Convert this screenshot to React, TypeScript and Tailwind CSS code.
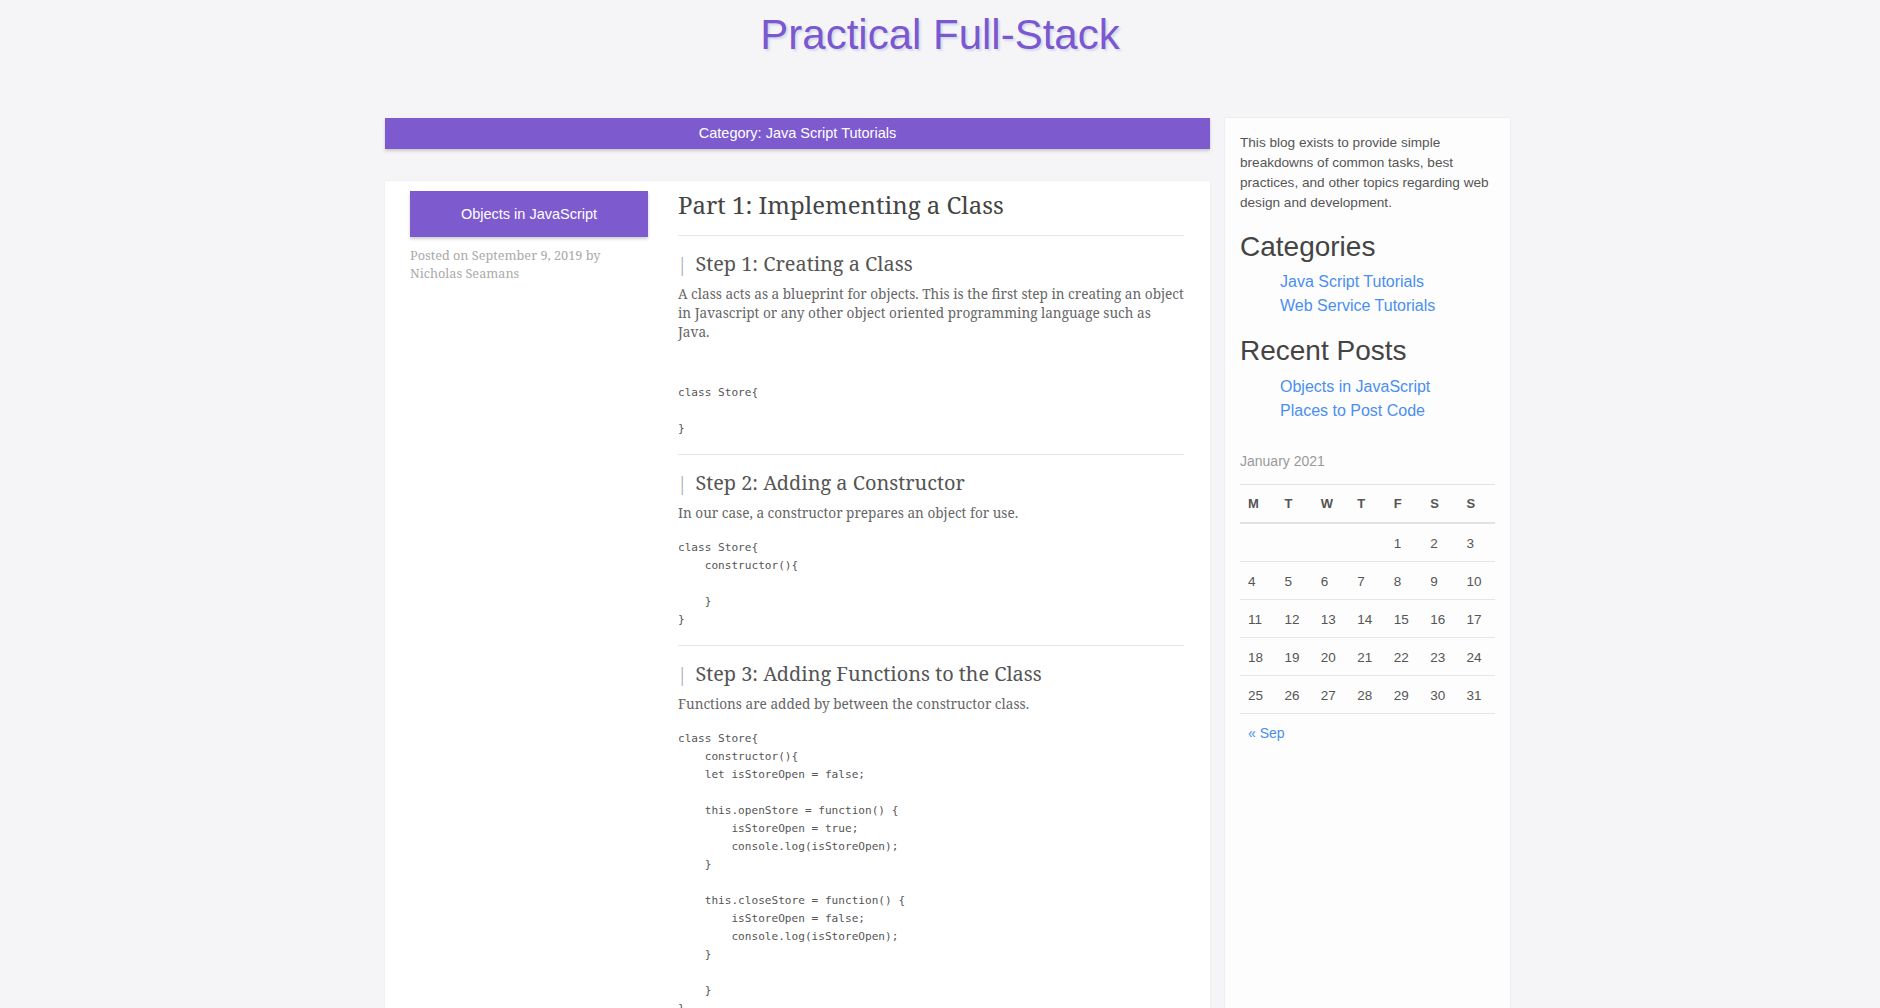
import React from "react";

const steps = [
  {
    title: "Step 1: Creating a Class",
    lines: [
      "A class acts as a blueprint for objects. This is the first step in creating an object",
      "in Javascript or any other object oriented programming language such as",
      "Java.",
    ],
    gap: "mt-[43px]",
    code: `class Store{

}`,
  },
  {
    title: "Step 2: Adding a Constructor",
    lines: ["In our case, a constructor prepares an object for use."],
    gap: "mt-[17px]",
    code: `class Store{
    constructor(){

    }
}`,
  },
  {
    title: "Step 3: Adding Functions to the Class",
    lines: ["Functions are added by between the constructor class."],
    gap: "mt-[17px]",
    code: `class Store{
    constructor(){
    let isStoreOpen = false;

    this.openStore = function() {
        isStoreOpen = true;
        console.log(isStoreOpen);
    }

    this.closeStore = function() {
        isStoreOpen = false;
        console.log(isStoreOpen);
    }

    }
}`,
  },
];

const weeks: (number | null)[][] = [
  [null, null, null, null, 1, 2, 3],
  [4, 5, 6, 7, 8, 9, 10],
  [11, 12, 13, 14, 15, 16, 17],
  [18, 19, 20, 21, 22, 23, 24],
  [25, 26, 27, 28, 29, 30, 31],
];

export default function App() {
  return (
    <div className="min-h-screen bg-[#f5f5f7] font-['Liberation_Sans',Arial,sans-serif]">
      {/* Site title */}
      <header className="h-[118px] pt-[12px] text-center">
        <h1 className="text-[42px] leading-[46px] text-[#7b58d0] [text-shadow:2px_2px_2px_#d3daec]">
          Practical Full-Stack
        </h1>
      </header>

      <div className="w-[1140px] mx-auto flex items-start">
        {/* Posts column */}
        <main className="w-[855px] px-[15px]">
          <div className="h-[31px] bg-[#7d5bcf] text-white text-[14.5px] leading-[31px] text-center shadow-[0_2px_3px_rgba(0,0,0,0.18)]">
            Category: Java Script Tutorials
          </div>

          <article className="mt-[32px] bg-white p-[10px] flex min-h-[1100px] shadow-[0_0_2px_rgba(0,0,0,0.06)]">
            <div className="w-[268px] shrink-0 px-[15px]">
              <div className="h-[46px] pt-[1px] bg-[#7d5bcf] text-white text-[14.5px] flex items-center justify-center shadow-[0_2px_3px_rgba(0,0,0,0.2)]">
                Objects in JavaScript
              </div>
              <p className="mt-[9px] font-['Noto_Serif',serif] text-[12.7px] leading-[18px] text-[#aaa]">
                Posted on September 9, 2019 by Nicholas Seamans
              </p>
            </div>

            <div className="w-[536px] shrink-0 px-[15px] font-['Noto_Serif',serif]">
              <h2 className="text-[24px] leading-[28px] text-[#444]">Part 1: Implementing a Class</h2>

              {steps.map((step, i) => (
                <section key={i}>
                  <hr className="mt-[16px] border-[#e6e6e6]" />
                  <h3 className="mt-[15px] text-[19.9px] leading-[26px] text-[#555]">
                    <span className="ml-[2px] mr-[11px] font-['Liberation_Serif',serif] text-[22px] text-[#a9afbd]">|</span>
                    {step.title}
                  </h3>
                  <p className="mt-[7px] text-[13.6px] leading-[19px] text-[#666]">
                    {step.lines.map((line, j) => (
                      <React.Fragment key={j}>
                        <span className="whitespace-nowrap">{line}</span>
                        {j < step.lines.length - 1 && <br />}
                      </React.Fragment>
                    ))}
                  </p>
                  <pre
                    className={`${step.gap} font-['DejaVu_Sans_Mono',monospace] text-[11.1px] leading-[18px] text-[#555]`}
                  >
                    {step.code}
                  </pre>
                </section>
              ))}
            </div>
          </article>
        </main>

        {/* Sidebar */}
        <aside className="w-[285px] min-h-[1000px] bg-[#fdfdfd] px-[15px] pt-[15px] shadow-[0_0_2px_rgba(0,0,0,0.08)]">
          <p className="text-[13.6px] leading-[20px] text-[#555]">
            This blog exists to provide simple breakdowns of common tasks, best practices, and other topics regarding web
            design and development.
          </p>

          <h3 className="mt-[17px] text-[28px] leading-[34px] text-[#444]">Categories</h3>
          <ul className="mt-[6px] pl-[40px] text-[16px] leading-[24px] text-[#4a8ff0]">
            <li>Java Script Tutorials</li>
            <li>Web Service Tutorials</li>
          </ul>

          <h3 className="mt-[16px] text-[28px] leading-[34px] text-[#444]">Recent Posts</h3>
          <ul className="mt-[7px] pl-[40px] text-[16px] leading-[24px] text-[#4a8ff0]">
            <li>Objects in JavaScript</li>
            <li>Places to Post Code</li>
          </ul>

          <div className="mt-[28px] text-[14px] leading-[20px] text-[#999]">January 2021</div>
          <div className="mt-[13px] border-t border-[#e3e3e3]">
            <div className="grid grid-cols-7 h-[39px] items-center border-b-2 border-[#dfe2e6] text-[13px] font-bold text-[#555]">
              {["M", "T", "W", "T", "F", "S", "S"].map((d, i) => (
                <div key={i} className="pl-[8px]">
                  {d}
                </div>
              ))}
            </div>
            {weeks.map((week, i) => (
              <div
                key={i}
                className="grid grid-cols-7 h-[38px] items-center border-b border-[#e6e6e6] text-[13.5px] text-[#555]"
              >
                {week.map((day, j) => (
                  <div key={j} className="pl-[8px] pt-[3px]">
                    {day ?? ""}
                  </div>
                ))}
              </div>
            ))}
          </div>
          <div className="mt-[9px] pl-[8px] text-[14px] leading-[20px] text-[#4a8ff0]">« Sep</div>
        </aside>
      </div>
    </div>
  );
}
